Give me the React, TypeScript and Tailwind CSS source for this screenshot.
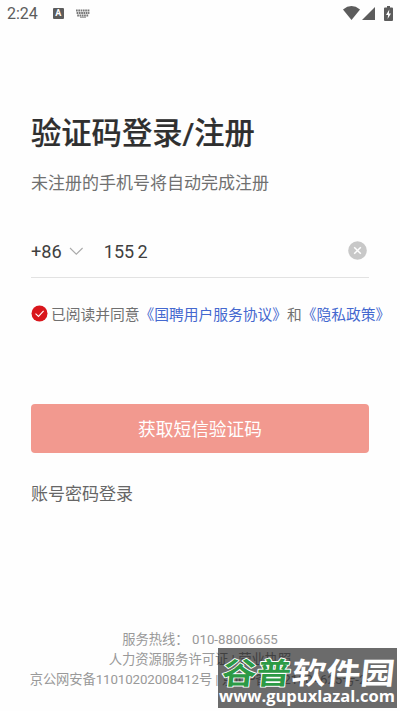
import React, { useState } from "react";

function StatusBar() {
  return (
    <div className="flex h-[28px] items-center pl-[7px] pr-[6px] text-[#5c5c5c]">
      <span className="font-['Roboto'] text-[16px] leading-none">2:24</span>
      <span className="mb-[1px] ml-[15px] flex h-[11px] w-[11px] items-center justify-center rounded-[1px] bg-[#5c5c5c] font-['Roboto'] text-[9px] font-bold leading-none text-white">A</span>
      <svg className="mb-[1px] ml-[12px]" width="14" height="9" viewBox="0 0 14 9" fill="none" stroke="#777" strokeWidth="1.8">
        <path d="M0 1.5H14" strokeDasharray="1.7 0.6" />
        <path d="M0.6 4H13.4" strokeDasharray="1.7 0.6" />
        <path d="M1.2 6.5H12.8" strokeDasharray="1.7 0.6" />
        <path d="M4 8.2H10" strokeWidth="0.9" />
      </svg>
      <div className="mb-[2px] ml-auto flex items-center">
        <svg width="17" height="14" viewBox="0 0 17 14">
          <path d="M0 3.4Q8.5 -3.2 17 3.4L8.5 14Z" fill="#5c5c5c" />
        </svg>
        <svg className="ml-[2px]" width="13" height="13" viewBox="0 0 13 13">
          <path d="M13 0V13H0Z" fill="#5c5c5c" />
        </svg>
        <svg className="ml-[9px] mr-[1px]" width="9" height="15" viewBox="0 0 9 15">
          <path d="M3 0H6V1.5H8Q9 1.5 9 2.5V14Q9 15 8 15H1Q0 15 0 14V2.5Q0 1.5 1 1.5H3Z" fill="#5c5c5c" />
          <path d="M5.3 3.5L2 9H4.1L3.6 13L7 7.5H4.9Z" fill="#fff" />
        </svg>
      </div>
    </div>
  );
}

function Watermark() {
  return (
    <div className="absolute left-[218px] top-[648px] h-[60px] w-[179px] bg-black/58">
      <svg className="overflow-visible" width="179" height="60" viewBox="0 0 179 60">
        <g fontFamily="'Noto Sans CJK SC', sans-serif" fontWeight="700" fontSize="30">
          <text transform="translate(3 35.5) skewX(-6) scale(1.15 1)" fill="#2c9a45" stroke="#fff" strokeWidth="1.8" strokeLinejoin="round" paintOrder="stroke">谷普</text>
          <text transform="translate(73 35.5) skewX(-6) scale(1.14 1)" fill="#fff">软件园</text>
        </g>
        <text x="1" y="54" textLength="176" lengthAdjust="spacingAndGlyphs" fontFamily="'Open Sans', sans-serif" fontWeight="700" fontSize="16.5" fill="#fff">www.gupuxlazal.com</text>
      </svg>
    </div>
  );
}

export default function App() {
  const [phone, setPhone] = useState("155 2");
  const [agreed, setAgreed] = useState(true);

  return (
    <div className="relative flex h-[711px] w-[400px] flex-col bg-[#fefefe] font-['Roboto','Noto_Sans_CJK_SC',sans-serif]">
      <StatusBar />

      <main className="flex flex-col px-[31px]">
        <h1 className="mt-[84px] whitespace-nowrap text-[30.3px] font-medium leading-[44px] text-[#2f2f2f] [-webkit-text-stroke:0.2px_#2f2f2f]">验证码登录/注册</h1>
        <p className="mt-[14px] text-[17px] leading-[26px] text-[#707070]">未注册的手机号将自动完成注册</p>

        {/* Phone number */}
        <div className="mt-[29px] flex h-[53px] items-center border-b border-[#e2e2e2]">
          <button className="flex items-center pt-[1px] text-[18.2px] text-[#404040]">
            +86
            <svg className="ml-[7px]" width="15" height="9" viewBox="0 0 15 9" fill="none">
              <path d="M1 1L7.3 7.2L13.6 1" stroke="#aaa" strokeWidth="1.1" />
            </svg>
          </button>
          <input
            value={phone}
            onChange={(e) => setPhone(e.target.value)}
            className="ml-[20px] w-[220px] bg-transparent text-[18px] text-[#404040] outline-none [word-spacing:-1px]"
          />
          <button onClick={() => setPhone("")} className="ml-auto mr-[2px]">
            <svg className="-mt-[2px]" width="19" height="19" viewBox="0 0 19 19">
              <circle cx="9.5" cy="9.5" r="9.3" fill="#c8c8c8" />
              <path d="M6.2 6.2L12.8 12.8M12.8 6.2L6.2 12.8" stroke="#fff" strokeWidth="1.5" />
            </svg>
          </button>
        </div>

        {/* Agreement */}
        <div className="mt-[26px] flex h-[22px] items-center whitespace-nowrap text-[14.75px] text-[#707070]">
          <button onClick={() => setAgreed(!agreed)} className="-mt-[3px] mr-[3px] shrink-0">
            <svg width="17" height="17" viewBox="0 0 17 17">
              <circle cx="8.5" cy="8.5" r="8" fill={agreed ? "#d9161c" : "#ccc"} />
              <path d="M4.5 8.6L7.5 11.4L12.6 5.8" fill="none" stroke="#fff" strokeWidth="1.1" />
            </svg>
          </button>
          <span>已阅读并同意</span>
          <a className="text-[#4468cf]">《国聘用户服务协议》</a>
          <span>和</span>
          <a className="text-[#4468cf]">《隐私政策》</a>
        </div>

        <button className="mt-[78px] h-[49px] rounded-[4px] bg-[#f2998f] pt-[3px] text-[17.7px] text-white">获取短信验证码</button>
        <a className="mt-[28px] text-[17px] leading-[26px] text-[#666]">账号密码登录</a>
      </main>

      <footer className="mb-[21px] mt-auto flex flex-col items-center whitespace-nowrap text-[13.3px] leading-[20px] text-[#999]">
        <p className="whitespace-pre">服务热线： 010-88006655</p>
        <p>人力资源服务许可证 | 营业执照</p>
        <p className="-ml-[4px] tracking-[-0.1px]">京公网安备11010202008412号 | 京ICP备2021004625号-2</p>
      </footer>

      <Watermark />
    </div>
  );
}
